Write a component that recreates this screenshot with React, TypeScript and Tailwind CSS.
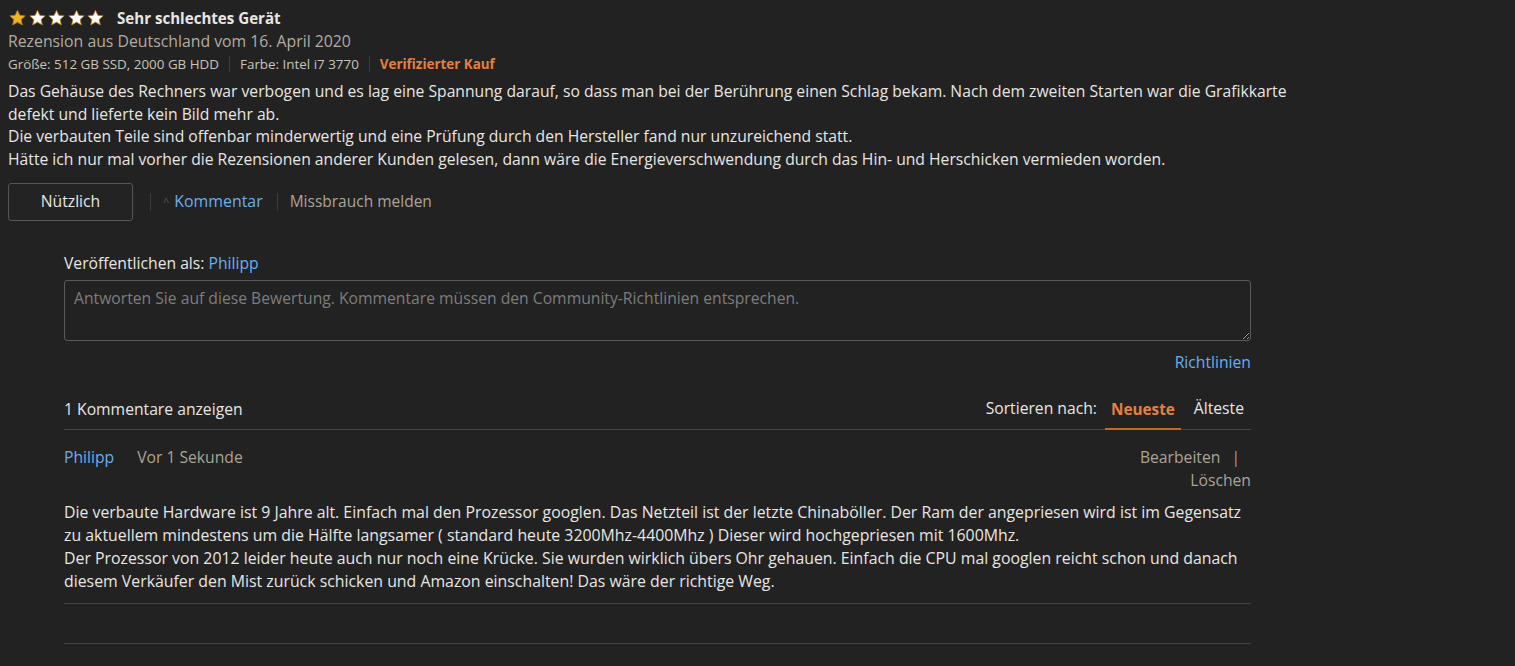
import React from 'react';

const font = { fontFamily: '"Open Sans", "Noto Sans", Arial, sans-serif' };

function Star({ filled }: { filled: boolean }) {
  return (
    <svg width="19" height="18" viewBox="0 0 24 24">
      <path
        d="M12 1.8l3.1 6.6 7.1.8-5.3 4.9 1.5 7.1L12 17.6l-6.4 3.6 1.5-7.1L1.8 9.2l7.1-.8z"
        fill={filled ? '#f0b323' : '#ffffff'}
        stroke="#b07a1a"
        strokeWidth="1.2"
        strokeLinejoin="round"
      />
    </svg>
  );
}

export default function App() {
  return (
    <div className="min-h-[666px] w-full bg-[#222222] text-[#e8e6e3]" style={font}>
      <div className="px-2 pt-[8px]">
        {/* rating + title */}
        <div className="flex items-center h-[20px]">
          <div className="flex gap-[0.5px]">
            <Star filled />
            <Star filled={false} />
            <Star filled={false} />
            <Star filled={false} />
            <Star filled={false} />
          </div>
          <span className="ml-[12px] text-[15.1px] font-bold">Sehr schlechtes Gerät</span>
        </div>
        <div className="mt-[2px] text-[15.8px] leading-[22px] text-[#b2aca2]">
          Rezension aus Deutschland vom 16. April 2020
        </div>
        <div className="flex items-center text-[13.4px] leading-[24px] text-[#c8c3bc]">
          <span>Größe: 512 GB SSD, 2000 GB HDD</span>
          <span className="mx-[10px] h-[16px] w-px bg-[#3d3d3d]" />
          <span>Farbe: Intel i7 3770</span>
          <span className="mx-[10px] h-[16px] w-px bg-[#3d3d3d]" />
          <span className="font-bold text-[#e8803c]">Verifizierter Kauf</span>
        </div>
        <div className="mt-[4px] text-[15.7px] leading-[22.7px]">
          <div>Das Gehäuse des Rechners war verbogen und es lag eine Spannung darauf, so dass man bei der Berührung einen Schlag bekam. Nach dem zweiten Starten war die Grafikkarte</div>
          <div>defekt und lieferte kein Bild mehr ab.</div>
          <div>Die verbauten Teile sind offenbar minderwertig und eine Prüfung durch den Hersteller fand nur unzureichend statt.</div>
          <div>Hätte ich nur mal vorher die Rezensionen anderer Kunden gelesen, dann wäre die Energieverschwendung durch das Hin- und Herschicken vermieden worden.</div>
        </div>
        {/* actions */}
        <div className="mt-[12px] flex items-center">
          <button className="h-[38px] w-[125px] rounded-[3px] border border-[#555555] bg-[#232323] text-[15.7px] text-[#e8e6e3]">
            Nützlich
          </button>
          <span className="ml-[17px] h-[18px] w-px bg-[#3a3a3a]" />
          <span className="ml-[12px] mr-[5px] text-[11px] text-[#555555]">^</span>
          <span className="text-[15.9px] text-[#6aaef0]">Kommentar</span>
          <span className="ml-[14px] h-[18px] w-px bg-[#3a3a3a]" />
          <span className="ml-[12px] text-[15.5px] text-[#aba499]">Missbrauch melden</span>
        </div>
      </div>

      {/* comment section */}
      <div className="ml-[64px] w-[1187px] pt-[31px]">
        <div className="text-[15.7px] leading-[22px]">
          Veröffentlichen als: <span className="text-[#6aaef0]">Philipp</span>
        </div>
        <textarea
          className="mt-[6px] block h-[61px] w-full resize-y rounded-[3px] border border-[#5a5a5a] bg-[#222222] px-[9px] py-[6px] text-[15.7px] leading-[22px] text-[#e8e6e3] placeholder-[#7d7d7d] outline-none"
          placeholder="Antworten Sie auf diese Bewertung. Kommentare müssen den Community-Richtlinien entsprechen."
          style={font}
        />
        <div className="mt-[10px] text-right text-[15.7px] leading-[22px] text-[#6aaef0]">Richtlinien</div>
        <div className="mt-[24px] flex items-end justify-between border-b border-[#444444]">
          <div className="pb-[9px] text-[15.7px] leading-[22px]">1 Kommentare anzeigen</div>
          <div className="flex items-end text-[15.7px] leading-[22px]">
            <span className="mr-[8px] pb-[10px]">Sortieren nach:</span>
            <span className="mb-[-1px] border-b-2 border-[#c06a1c] px-[6px] pb-[8px] text-[15.3px] font-bold text-[#e8803c]">Neueste</span>
            <span className="pl-[13px] pr-[7px] pb-[10px]">Älteste</span>
          </div>
        </div>
        <div className="mt-[16px] flex items-start justify-between text-[15.7px] leading-[23px]">
          <div className="flex">
            <span className="text-[#6aaef0]">Philipp</span>
            <span className="ml-[23px] text-[#aba499]">Vor 1 Sekunde</span>
          </div>
          <div className="text-right text-[#aba499]">
            <div>Bearbeiten<span className="ml-[11px] mr-[11px]">|</span></div>
            <div>Löschen</div>
          </div>
        </div>
        <div className="mt-[9px] border-b border-[#444444] pb-[10px] text-[15.85px] leading-[23px]">
          <div>Die verbaute Hardware ist 9 Jahre alt. Einfach mal den Prozessor googlen. Das Netzteil ist der letzte Chinaböller. Der Ram der angepriesen wird ist im Gegensatz</div>
          <div>zu aktuellem mindestens um die Hälfte langsamer ( standard heute 3200Mhz-4400Mhz ) Dieser wird hochgepriesen mit 1600Mhz.</div>
          <div>Der Prozessor von 2012 leider heute auch nur noch eine Krücke. Sie wurden wirklich übers Ohr gehauen. Einfach die CPU mal googlen reicht schon und danach</div>
          <div>diesem Verkäufer den Mist zurück schicken und Amazon einschalten! Das wäre der richtige Weg.</div>
        </div>
        <div className="h-[40px] border-b border-[#444444]" />
      </div>
    </div>
  );
}
